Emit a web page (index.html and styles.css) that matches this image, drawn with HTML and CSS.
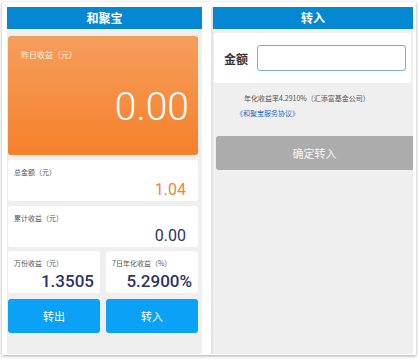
FILE: index.html
```html
<!DOCTYPE html>
<html lang="zh">
<head>
<meta charset="utf-8">
<link rel="stylesheet" href="styles.css">
</head>
<body>
<div class="frame">
  <div class="screen screen-left">
    <div class="header">和聚宝</div>
    <div class="content">
      <div class="hero">
        <div class="hero-label">昨日收益（元）</div>
        <div class="hero-value">0.00</div>
      </div>
      <div class="card">
        <div class="label">总金额（元）</div>
        <div class="value orange">1.04</div>
      </div>
      <div class="card">
        <div class="label">累计收益（元）</div>
        <div class="value navy">0.00</div>
      </div>
      <div class="row">
        <div class="card half">
          <div class="label">万份收益（元）</div>
          <div class="value navy bold">1.3505</div>
        </div>
        <div class="card half">
          <div class="label">7日年化收益（%）</div>
          <div class="value navy bold">5.2900%</div>
        </div>
      </div>
      <div class="row buttons">
        <div class="btn">转出</div>
        <div class="btn">转入</div>
      </div>
    </div>
  </div>
  <div class="screen screen-right">
    <div class="header">转入</div>
    <div class="content-right">
      <div class="amount-box">
        <span class="amount-label">金额</span>
        <div class="input"></div>
      </div>
      <div class="note">年化收益率4.2910%（汇添富基金公司）</div>
      <div class="link">《和聚宝服务协议》</div>
      <div class="confirm">确定转入</div>
    </div>
  </div>
</div>
</body>
</html>
```
FILE: styles.css
```css
* { box-sizing: border-box; margin: 0; padding: 0; }
html, body { background: #ffffff; }
body {
  width: 420px;
  height: 360px;
  font-family: "Noto Sans CJK SC", "Noto Sans", sans-serif;
  overflow: hidden;
}
.frame {
  margin: 2px 0 0 2px;
  width: 414px;
  height: 353px;
  background: #ffffff;
  box-shadow: 0 1px 3px rgba(0,0,0,0.35);
  padding: 5px 3px 1px 5px;
  display: flex;
  gap: 9px;
}
.screen {
  background: #efefef;
  display: flex;
  flex-direction: column;
}
.screen-left { width: 195px; }
.screen-right { width: 202px; border-left: 2px solid #e4e4e4; }
.header {
  background: #0588d3;
  color: #ffffff;
  font-size: 12px;
  font-weight: bold;
  text-align: center;
  line-height: 22px;
  border-bottom: 2px solid #f6f6f6;
  height: 24px;
}
.content {
  padding: 5px 4px 0 1px;
  display: flex;
  flex-direction: column;
}
.hero {
  height: 119px;
  border-radius: 3px;
  background: linear-gradient(#f69d5c, #f5812b);
  padding: 13px 0 0 13px;
  position: relative;
}
.hero-label {
  color: #fff3e8;
  font-size: 8px;
}
.hero-value {
  position: absolute;
  right: 9px;
  bottom: 28px;
  color: #ffffff;
  font-family: Roboto, sans-serif;
  font-weight: 300;
  font-size: 39px;
  line-height: 1;
}
.card {
  background: #ffffff;
  border-radius: 3px;
  height: 41px;
  margin-top: 5px;
  padding: 7px 12px 0 6px;
}
.label {
  font-size: 7px;
  color: #555555;
  line-height: 10px;
}
.value {
  font-family: Roboto, sans-serif;
  font-size: 16px;
  text-align: right;
  line-height: 20px;
  margin-top: 3px;
}
.orange { color: #f5852c; }
.navy { color: #2b3466; }
.bold { font-weight: 500; font-size: 17px; margin-top: 3px; }
.row {
  display: flex;
  gap: 6px;
  margin-top: 4px;
}
.half {
  flex: 1;
  margin-top: 0;
  height: 42px;
  padding: 7px 6px 0 6px;
}
.buttons { margin-top: 6px; }
.btn {
  flex: 1;
  height: 34px;
  background: #0aa1f6;
  border-radius: 3px;
  color: #ffffff;
  font-size: 11px;
  text-align: center;
  line-height: 34px;
}
.content-right {
  padding: 2px 0 0 1px;
  display: flex;
  flex-direction: column;
}
.amount-box {
  background: #ffffff;
  height: 50px;
  margin-right: 2px;
  border-radius: 3px;
  display: flex;
  align-items: center;
  padding: 0 5px 0 10px;
  gap: 9px;
}
.amount-label {
  font-size: 12px;
  font-weight: bold;
  color: #333333;
}
.input {
  flex: 1;
  height: 26px;
  border: 1px solid #7aaed6;
  border-radius: 3px;
  background: #ffffff;
}
.note {
  font-size: 7px;
  color: #555555;
  margin: 10px 0 0 30px;
  line-height: 10px;
}
.link {
  font-size: 7px;
  color: #2a6ec4;
  margin: 5px 0 0 22px;
  line-height: 10px;
}
.confirm {
  margin-top: 18px;
  margin-left: 2px;
  height: 34px;
  background: #acacac;
  border-radius: 3px 0 0 3px;
  color: #f4f4f4;
  font-size: 11px;
  text-align: center;
  line-height: 34px;
}
```
